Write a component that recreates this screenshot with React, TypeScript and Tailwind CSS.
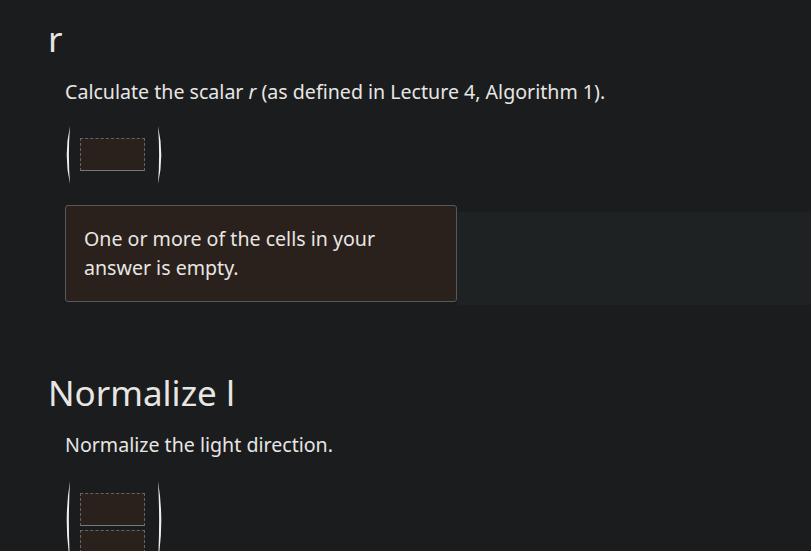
import React from 'react';

const Paren = ({ right = false, h }: { right?: boolean; h: number }) => {
  const m = h / 2;
  const d = right
    ? `M1 0 Q7.6 ${m} 1 ${h} Q3.2 ${m} 1 0 Z`
    : `M5 0 Q-1.6 ${m} 5 ${h} Q2.8 ${m} 5 0 Z`;
  return (
    <svg width="6" height={h} viewBox={`0 0 6 ${h}`} className="shrink-0">
      <path d={d} fill="#eeeeee" />
    </svg>
  );
};

const Cell = () => (
  <div
    className="w-[65px] h-[33px] bg-[#2a211c] border border-dashed border-[#5f676d] border-b-[#737b80]"
    style={{ borderBottomStyle: 'solid' }}
  />
);

const Matrix = ({ rows }: { rows: number }) => (
  <div className="flex items-stretch">
    <Paren h={rows === 1 ? 58 : 80} />
    <div className="flex flex-col gap-[4px] py-[12px] ml-[9px] mr-[12px]">
      {Array.from({ length: rows }).map((_, i) => (
        <Cell key={i} />
      ))}
    </div>
    <Paren right h={rows === 1 ? 58 : 80} />
  </div>
);

const App = () => {
  return (
    <div className="w-[811px] h-[551px] overflow-hidden bg-[#1b1c1e] text-[#e8e6e3] font-['Noto_Sans',sans-serif]">
      <div className="pl-12 pt-[14px]">
        <h2 className="text-[35px] leading-[50px] h-[50px]">r</h2>
        <div className="pl-[17px] pt-[14px]">
          <p className="text-[19.6px] leading-[28px]">
            Calculate the scalar <i>r</i> (as defined in Lecture 4, Algorithm 1).
          </p>
          <div className="mt-[19px] pt-[1px]">
            <Matrix rows={1} />
          </div>
        </div>
        <div className="flex items-stretch mt-[21px] pl-[17px]">
          <div className="w-[392px] h-[97px] rounded-[3px] border border-[#56595c] bg-[#2a211c] px-[18px] pt-[18px] text-[19.6px] leading-[29px]">
            One or more of the cells in your answer is empty.
          </div>
          <div className="flex-1 mt-[7px] h-[93px] bg-[#1f2223]" />
        </div>
        <h2 className="mt-[63px] text-[35px] leading-[50px]">Normalize l</h2>
        <div className="pl-[17px] pt-[13px]">
          <p className="text-[19.6px] leading-[28px]">Normalize the light direction.</p>
          <div className="mt-[22px]">
            <Matrix rows={2} />
          </div>
        </div>
      </div>
    </div>
  );
};

export default App;
